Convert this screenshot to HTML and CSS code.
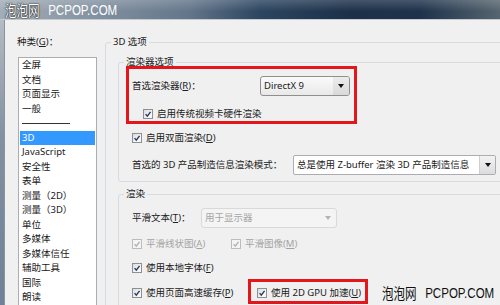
FILE: index.html
```html
<!DOCTYPE html>
<html lang="zh-CN">
<head>
    <meta charset="UTF-8">
    <title>首选项 - 3D</title>
    <link rel="stylesheet" href="styles.css">
</head>
<body>
    <div class="titlebar">
        <div class="brand brand-top"><span class="cn">泡泡网</span><span class="en">PCPOP.COM</span></div>
    </div>

    <div class="window">
        <div class="frame"></div>

        <!-- colonne des catégories -->
        <div class="category">
            <div class="cat-label">种类(<u>G</u>)：</div>
            <ul class="listbox">
                <li>全屏</li>
                <li>文档</li>
                <li>页面显示</li>
                <li>一般</li>
                <li class="sep"></li>
                <li class="selected">3D</li>
                <li>JavaScript</li>
                <li>安全性</li>
                <li>表单</li>
                <li>测量（2D）</li>
                <li>测量（3D）</li>
                <li>单位</li>
                <li>多媒体</li>
                <li>多媒体信任</li>
                <li>辅助工具</li>
                <li>国际</li>
                <li>朗读</li>
            </ul>
        </div>

        <fieldset class="group options">
            <legend>3D 选项</legend>

            <fieldset class="group renderer">
                <legend>渲染器选项</legend>
                <div class="mark mark-renderer">
                    <div class="row">
                        <span>首选渲染器(<u>R</u>)：</span>
                        <div class="combo combo-directx">
                            <span class="combo-text">DirectX 9</span>
                            <span class="arrow-btn"></span>
                        </div>
                    </div>
                    <div class="check check-legacy">
                        <span class="cb"><svg viewBox="0 0 10 10"><path d="M2 5.2l2.1 2.4L8.2 2.3"/></svg></span>
                        <span>启用传统视频卡硬件渲染</span>
                    </div>
                </div>
                <div class="check check-double">
                    <span class="cb"><svg viewBox="0 0 10 10"><path d="M2 5.2l2.1 2.4L8.2 2.3"/></svg></span>
                    <span>启用双面渲染(<u>D</u>)</span>
                </div>
                <div class="row row-mode">
                    <span class="lbl lbl-mode">首选的 3D 产品制造信息渲染模式：</span>
                    <div class="combo combo-mode">
                        <span class="combo-text">总是使用 Z-buffer 渲染 3D 产品制造信息</span>
                        <span class="arrow-btn"></span>
                    </div>
                </div>
            </fieldset>

            <fieldset class="group render">
                <legend>渲染</legend>
                <div class="row row-smooth">
                    <span class="lbl lbl-smooth">平滑文本(<u>T</u>)：</span>
                    <div class="combo combo-disabled">
                        <span class="combo-text">用于显示器</span>
                        <span class="arrow-btn"></span>
                    </div>
                </div>
                <div class="row row-lines">
                    <div class="check disabled col-first">
                        <span class="cb"><svg viewBox="0 0 10 10"><path d="M2 5.2l2.1 2.4L8.2 2.3"/></svg></span>
                        <span>平滑线状图(<u>A</u>)</span>
                    </div>
                    <div class="check disabled">
                        <span class="cb"><svg viewBox="0 0 10 10"><path d="M2 5.2l2.1 2.4L8.2 2.3"/></svg></span>
                        <span>平滑图像(<u>M</u>)</span>
                    </div>
                </div>
                <div class="check check-fonts">
                    <span class="cb"><svg viewBox="0 0 10 10"><path d="M2 5.2l2.1 2.4L8.2 2.3"/></svg></span>
                    <span>使用本地字体(<u>F</u>)</span>
                </div>
                <div class="row row-cache">
                    <div class="check col-cache">
                        <span class="cb"><svg viewBox="0 0 10 10"><path d="M2 5.2l2.1 2.4L8.2 2.3"/></svg></span>
                        <span>使用页面高速缓存(<u>P</u>)</span>
                    </div>
                    <div class="mark mark-gpu">
                        <div class="check">
                            <span class="cb"><svg viewBox="0 0 10 10"><path d="M2 5.2l2.1 2.4L8.2 2.3"/></svg></span>
                            <span>使用 2D GPU 加速(<u>U</u>)</span>
                        </div>
                    </div>
                </div>
            </fieldset>
        </fieldset>
    </div>

    <div class="brand brand-bottom"><span class="cn">泡泡网</span><span class="en">PCPOP.COM</span></div>
</body>
</html>
```

FILE: styles.css
```css
* {
    box-sizing: border-box;
}
html, body {
    margin: 0;
}
body {
    position: relative;
    width: 500px;
    height: 305px;
    overflow: hidden;
    background: #f0f0f0;
    font-family: "Noto Sans", "Noto Sans CJK SC", sans-serif;
    font-size: 9.5px;
    color: #202020;
}
u {
    text-decoration: underline;
    text-underline-offset: 1px;
}

/* barre de titre */
.titlebar {
    height: 20px;
    display: flex;
    align-items: center;
    padding-left: 5px;
    border-bottom: 1px solid #c4cad0;
    background:
        linear-gradient(to bottom, rgba(255, 255, 255, 0.18), rgba(255, 255, 255, 0) 60%),
        linear-gradient(to right, #a3adb7 0%, #8593a2 18%, #62758a 38%, #2c4560 52%, #1c3049 70%, #1e324b 84%, #56656f 100%);
}
.brand {
    display: inline-flex;
    align-items: center;
    gap: 11px;
    font-size: 15px;
    line-height: 18px;
    transform: scaleX(0.77);
    transform-origin: left center;
    white-space: nowrap;
}
.brand .cn {
    font-family: "Noto Sans CJK SC", sans-serif;
}
.brand .en {
    font-family: "Liberation Sans", sans-serif;
}
.brand-top {
    color: #fff;
}
.brand-top .cn {
    text-shadow: 0 0 2px #000, 0 0 1px #000;
}
.brand-bottom {
    position: absolute;
    left: 382px;
    top: 284px;
    color: #111;
}

/* fenêtre */
.window {
    display: flex;
    align-items: flex-start;
    height: 285px;
    overflow: hidden;
}
.frame {
    width: 5px;
    align-self: stretch;
    flex: none;
    background: linear-gradient(#b4bcc4, #8391a1 40%, #6e8198);
    border-right: 1px solid #8b949d;
}
.category {
    width: 79px;
    flex: none;
    margin-left: 13px;
    padding-top: 14px;
}
.cat-label {
    line-height: 16px;
    margin: 0 0 7px -1px;
}
.listbox {
    list-style: none;
    margin: 0;
    padding: 0;
    height: 250px;
    background: #fff;
    border: 1px solid #abadb3;
}
.listbox li {
    height: 14.5px;
    line-height: 14.5px;
    margin: 0 1px;
    padding-left: 2px;
    white-space: nowrap;
}
.listbox li.sep {
    display: flex;
    align-items: center;
}
.listbox li.sep::before {
    content: "";
    width: 48px;
    height: 1px;
    background: #333;
}
.listbox li.selected {
    background: #3399ff;
    color: #fff;
}

/* cadres de groupe */
.group {
    margin: 0;
    min-width: 0;
    border: 1px solid #d5dbe0;
    border-radius: 3px;
}
.group > legend {
    padding: 0 2px;
    line-height: 16px;
}
.options {
    width: 420px;
    flex: none;
    margin: 14px 0 0 8px;
    padding: 4px 0 0 12px;
}
.options > legend {
    margin-left: -7px;
}
.renderer {
    padding: 0 0 6px 13px;
}
.renderer > legend,
.render > legend {
    margin-left: -8px;
}
.render {
    margin-top: 4px;
    padding: 6px 0 20px 13px;
}

.row {
    display: flex;
    align-items: center;
    line-height: 14px;
}
.lbl {
    flex: none;
}
.lbl-mode {
    width: 161px;
}
.lbl-smooth {
    width: 69px;
}

/* cadres rouges */
.mark {
    border: 3px solid #e2161b;
}
.mark-renderer {
    width: 231px;
    margin: -4px 0 0 -6px;
    padding: 7px 4px 0 3px;
}
.mark-renderer .row {
    justify-content: space-between;
}
.mark-gpu {
    padding: 4px 4px 1px 6px;
}

/* cases à cocher */
.check {
    display: flex;
    align-items: center;
    gap: 4px;
    height: 14px;
    line-height: 14px;
    white-space: nowrap;
}
.cb {
    width: 10px;
    height: 10px;
    flex: none;
    border: 1px solid #8e8f8f;
    background: linear-gradient(135deg, #d9dce0, #f7f7f7 70%);
    display: flex;
}
.cb svg {
    width: 8px;
    height: 8px;
    fill: none;
    stroke: #263460;
    stroke-width: 1.7;
}
.check.disabled {
    color: #a3a3a3;
}
.check.disabled .cb {
    border-color: #bcbcbc;
    background: #f4f4f4;
}
.check.disabled .cb svg {
    stroke: #b0b0b0;
}
.check-legacy {
    margin-top: 11px;
    padding-left: 11px;
}
.check-double {
    margin-top: 7px;
}
.row-mode {
    margin-top: 10px;
}
.row-lines {
    margin-top: 9px;
}
.col-first {
    width: 99px;
}
.check-fonts {
    margin-top: 10px;
}
.row-cache {
    margin-top: 4px;
    align-items: flex-start;
}
.col-cache {
    width: 116px;
    margin-top: 7px;
}

/* listes déroulantes */
.combo {
    display: flex;
    align-items: center;
    height: 20px;
    flex: none;
    padding-left: 3px;
    border: 1px solid #abadb3;
    border-radius: 2px;
    background: #fff;
    white-space: nowrap;
    overflow: hidden;
}
.combo .arrow-btn {
    margin-left: auto;
    width: 16px;
    align-self: stretch;
    display: flex;
    align-items: center;
    justify-content: center;
    background: linear-gradient(#f3f3f3, #dcdcdc);
    border-left: 1px solid #cfcfcf;
}
.combo .arrow-btn::before {
    content: "";
    border-left: 3.5px solid transparent;
    border-right: 3.5px solid transparent;
    border-top: 4px solid #111;
}
.combo-directx {
    width: 90px;
    border-color: #8e8f8f;
    border-radius: 3px;
    background: linear-gradient(#fafafa, #e9e9e9);
}
.combo-directx .arrow-btn {
    border-left: none;
    background: linear-gradient(#ececec, #d9d9d9);
}
.combo-mode {
    width: 203px;
}
.combo-disabled {
    width: 136px;
    color: #a6a6a6;
    border-color: #d9d9d9;
    border-radius: 3px;
    background: #f4f4f4;
}
.combo-disabled .arrow-btn {
    background: none;
    border-left: none;
}
.combo-disabled .arrow-btn::before {
    border-top-color: #b3b3b3;
}
```
